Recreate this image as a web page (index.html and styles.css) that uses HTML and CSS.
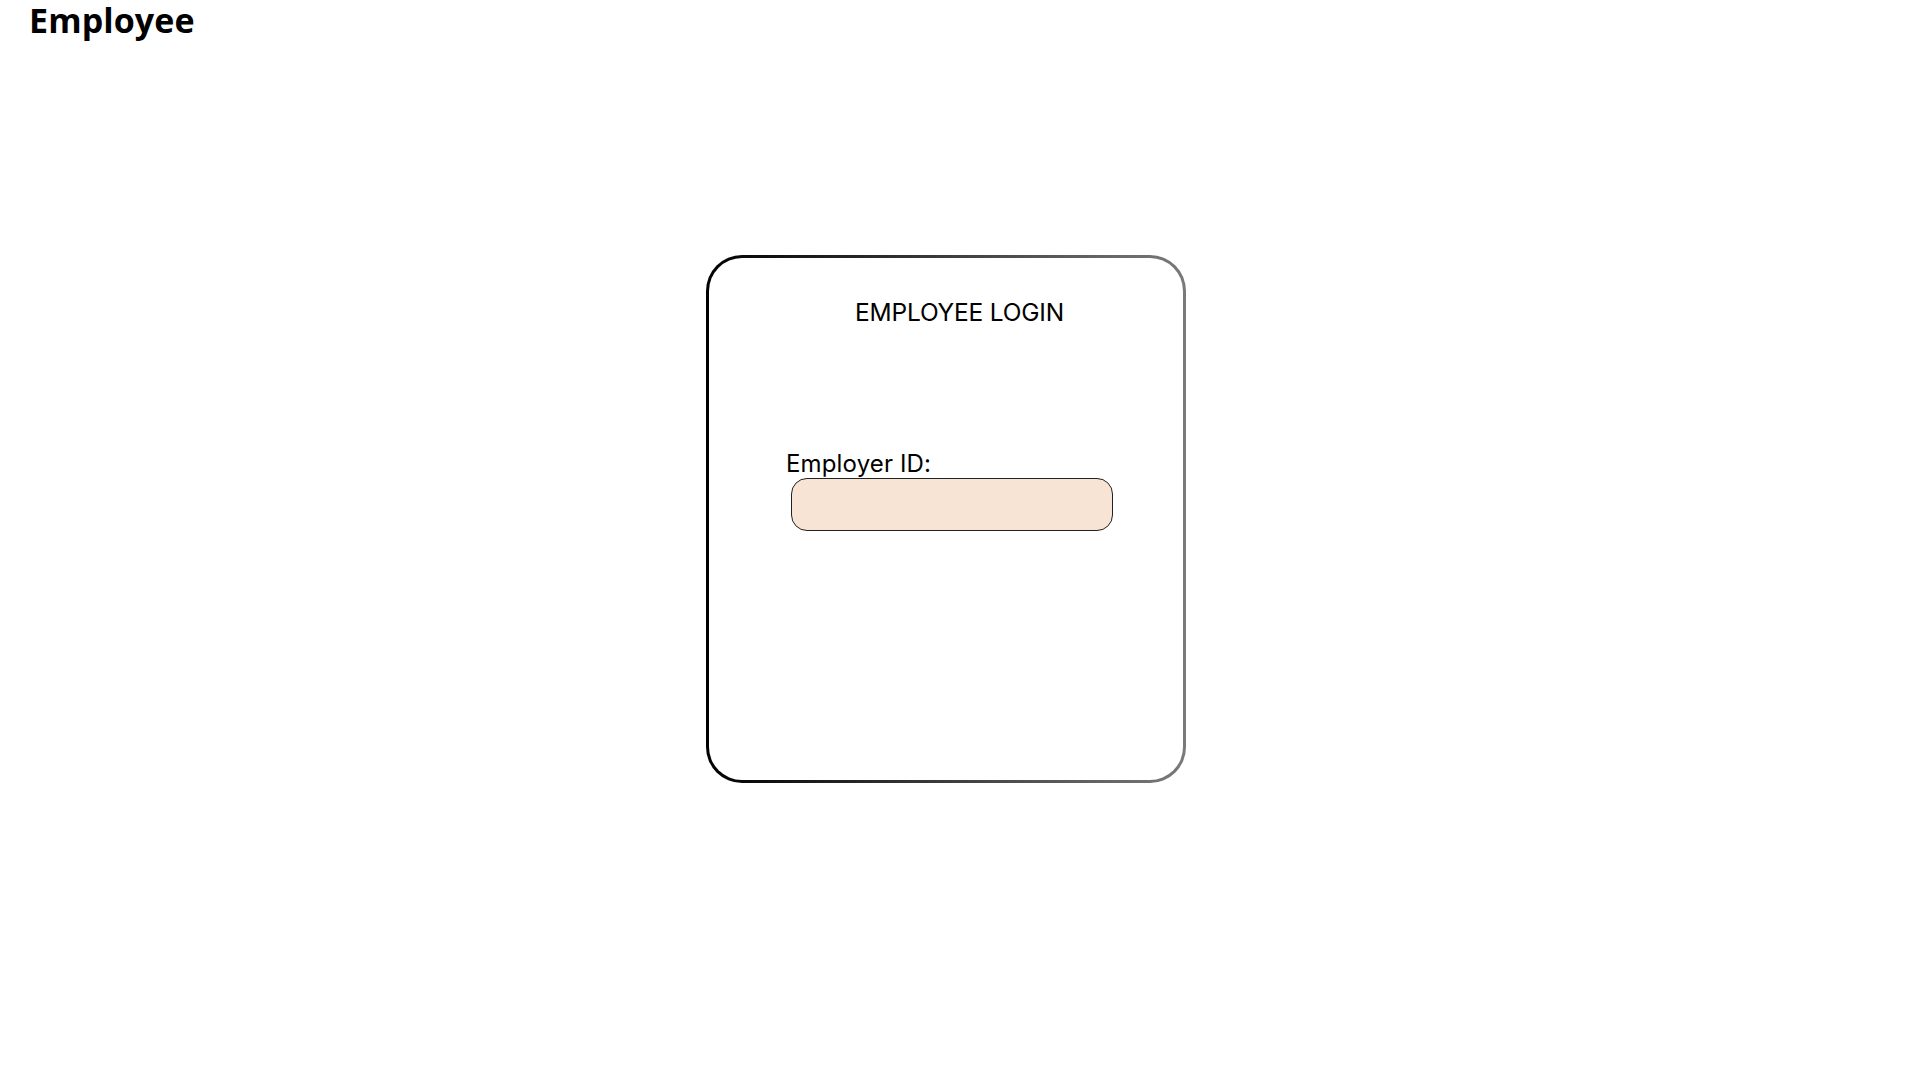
FILE: index.html
```html
<!DOCTYPE html>
<html lang="en">
<head>
<meta charset="utf-8">
<title>Employee</title>
<link rel="stylesheet" href="styles.css">
</head>
<body>
<header class="page-header">
  <h1 class="page-title">Employee</h1>
</header>
<main class="stage">
  <section class="login-card">
    <h2 class="login-title">EMPLOYEE LOGIN</h2>
    <div class="field">
      <label class="field-label" for="emp-id">Employer ID:</label>
      <input class="field-input" id="emp-id" type="text">
    </div>
  </section>
</main>
</body>
</html>
```
FILE: styles.css
```css
html, body {
  margin: 0;
  padding: 0;
  background: #ffffff;
}
body {
  width: 1920px;
  height: 1080px;
  overflow: hidden;
  font-family: Inter, "Liberation Sans", sans-serif;
  color: #000;
}
.page-header {
  padding-left: 29px;
}
.page-title {
  margin: 0;
  font-family: "Open Sans", "Liberation Sans", sans-serif;
  font-weight: 700;
  font-size: 34px;
  line-height: 40px;
  letter-spacing: 0.1px;
}
.stage {
  padding-top: 215px;
  padding-left: 706px;
}
.login-card {
  box-sizing: border-box;
  width: 480px;
  height: 528px;
  border: 3px solid transparent;
  border-radius: 36px;
  background:
    linear-gradient(#fff, #fff) padding-box,
    linear-gradient(90deg, #000 0%, #2a2a2a 35%, #7a7a7a 100%) border-box;
  padding-top: 39px;
  display: flex;
  flex-direction: column;
}
.login-title {
  margin: 0;
  font-weight: 400;
  font-size: 24.5px;
  line-height: 30px;
  text-align: center;
  padding-left: 27px;
  letter-spacing: -0.2px;
}
.field {
  margin-top: 122px;
  margin-left: 77px;
  display: flex;
  flex-direction: column;
  align-items: flex-start;
}
.field-label {
  font-size: 24px;
  line-height: 29px;
  letter-spacing: 0.15px;
}
.field-input {
  box-sizing: border-box;
  margin: 0 0 0 5px;
  width: 322px;
  height: 53px;
  border: 1px solid #222;
  border-radius: 16px;
  background: #f8e4d4;
  outline: none;
  padding: 0 14px;
  font: inherit;
}
```
